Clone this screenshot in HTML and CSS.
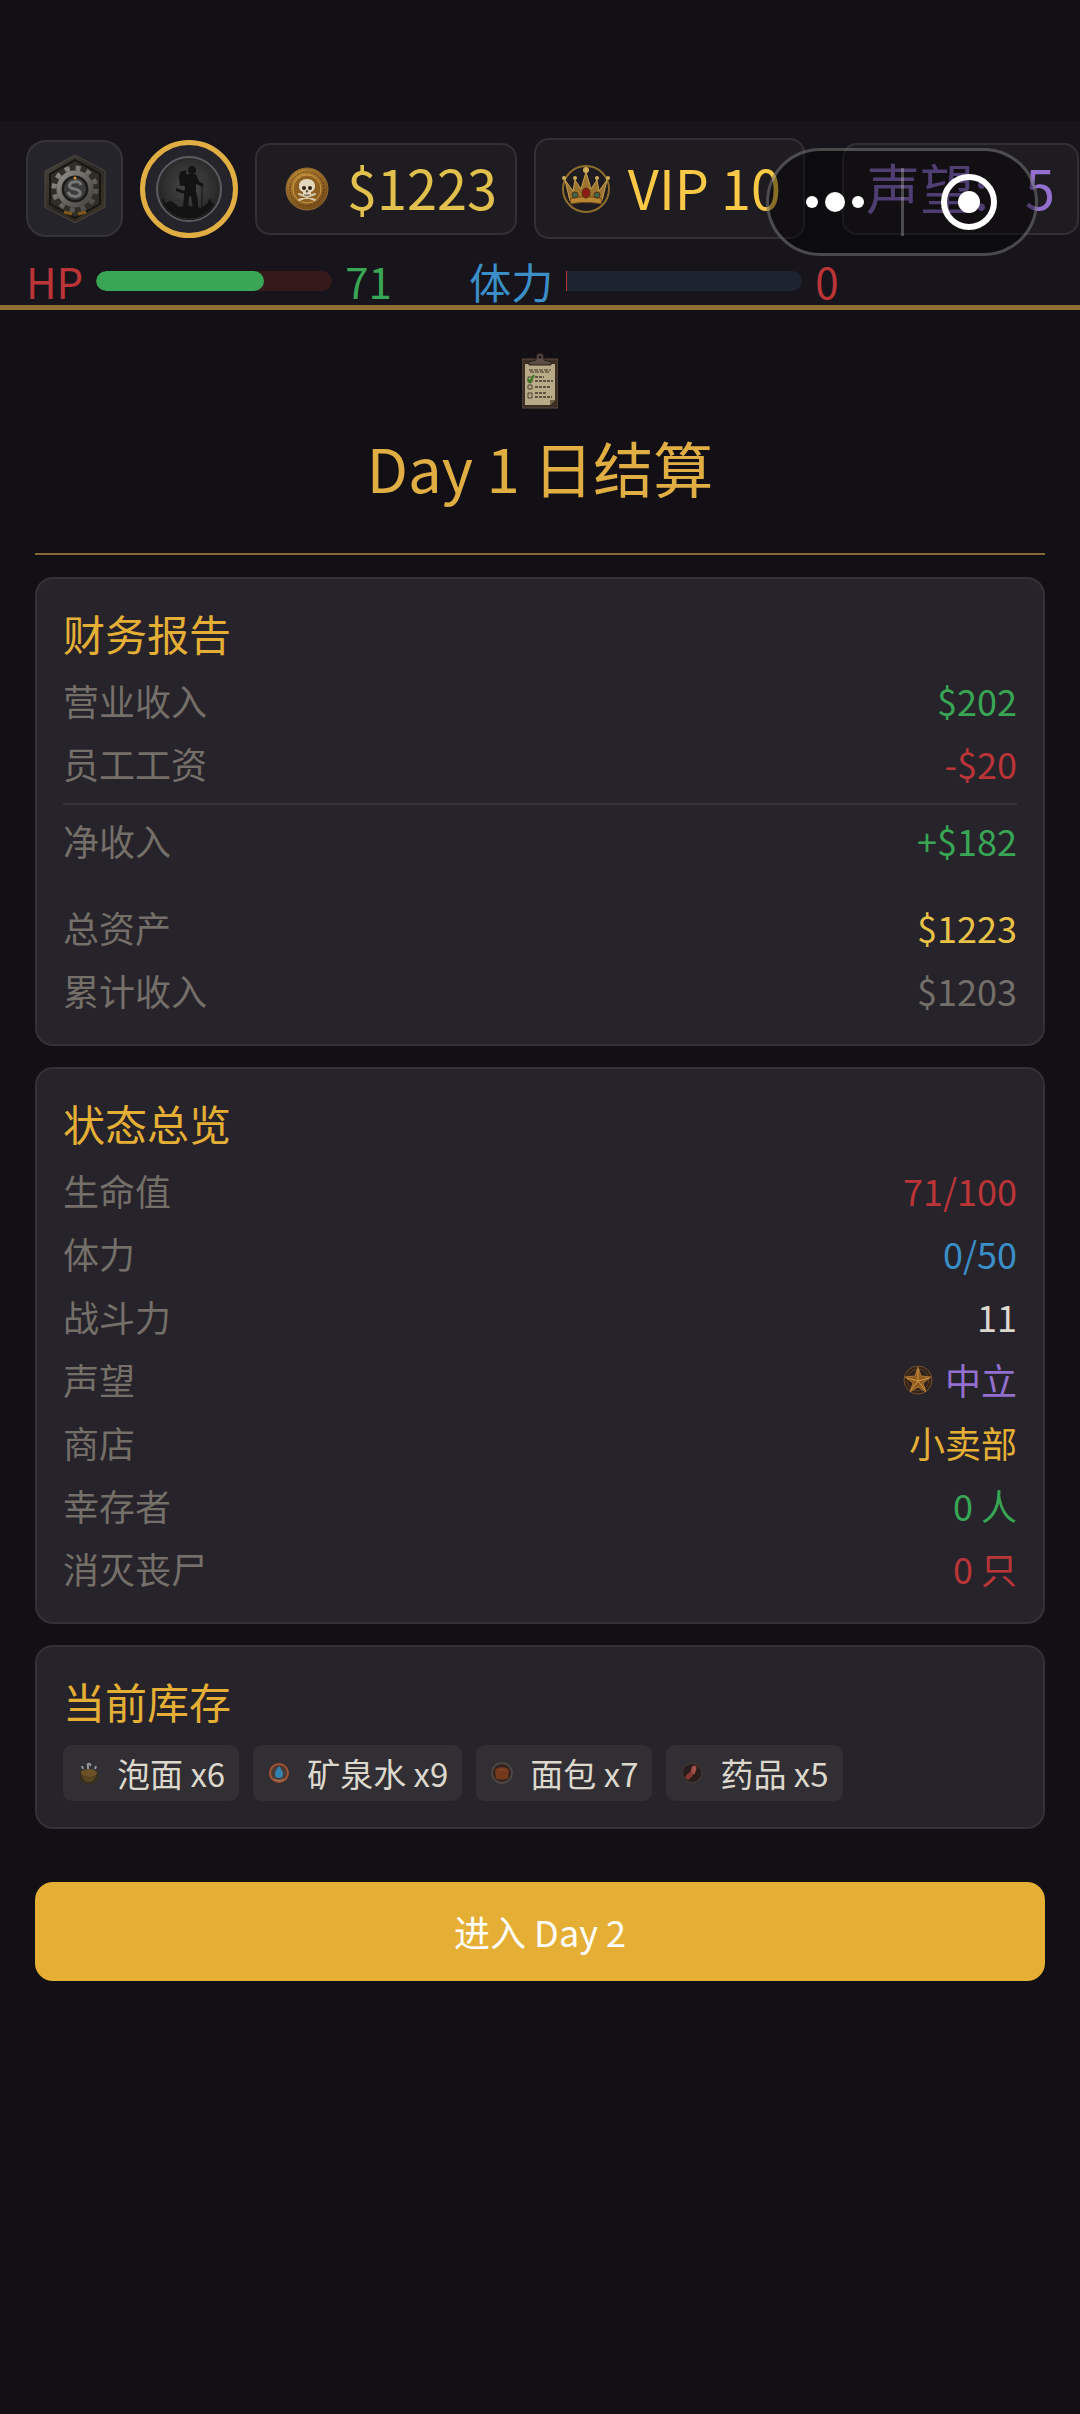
FILE: index.html
```html
<!DOCTYPE html>
<html lang="zh-CN">
<head>
    <meta charset="UTF-8">
    <meta name="viewport" content="width=device-width, initial-scale=1.0">
    <title>Day 1 日结算</title>
    <link rel="stylesheet" href="styles.css">
</head>
<body>
    <header class="topbar">
        <div class="topbar-row">
            <button class="logo-btn" type="button" aria-label="菜单">
                <svg width="64" height="70" viewBox="0 0 64 70">
                    <defs>
                        <linearGradient id="iron" x1="0" y1="0" x2="1" y2="1">
                            <stop offset="0" stop-color="#4a4741"/>
                            <stop offset="0.5" stop-color="#2b2823"/>
                            <stop offset="1" stop-color="#403528"/>
                        </linearGradient>
                        <linearGradient id="steel" x1="0" y1="0" x2="1" y2="1">
                            <stop offset="0" stop-color="#8f8d88"/>
                            <stop offset="1" stop-color="#45433f"/>
                        </linearGradient>
                    </defs>
                    <path d="M32 1 62 17V53L32 69 2 53V17Z" fill="url(#iron)" stroke="#4a463f"/>
                    <path d="M32 6 57 20V50L32 64 7 50V20Z" fill="#302c26" stroke="#171512" stroke-width="2"/>
                    <circle cx="32" cy="35" r="21" fill="none" stroke="url(#steel)" stroke-width="5" stroke-dasharray="5 6"/>
                    <circle cx="32" cy="35" r="16" fill="#2a2927" stroke="url(#steel)" stroke-width="5"/>
                    <circle cx="32" cy="35" r="12" fill="#3b3b3b" stroke="#1b1a19" stroke-width="2"/>
                    <path d="M38 31c-1-3-4-4-7-3-4 0-6 4-3 6 3 1 8 1 9 4 1 4-4 5-7 4-3 0-4-2-5-4" fill="none" stroke="#777775" stroke-width="3"/>
                    <circle cx="32" cy="24" r="1.5" fill="#d99a2b"/>
                    <path d="M21 58l8 2M35 60l8-2" stroke="#80571c" stroke-width="3"/>
                </svg>
            </button>
            <button class="avatar-btn" type="button" aria-label="角色">
                <svg width="68" height="68" viewBox="0 0 68 68">
                    <defs>
                        <radialGradient id="fog" cx="0.5" cy="0.45" r="0.6">
                            <stop offset="0" stop-color="#4a4a4a"/>
                            <stop offset="1" stop-color="#1f1f20"/>
                        </radialGradient>
                        <clipPath id="disc"><circle cx="34" cy="34" r="31"/></clipPath>
                    </defs>
                    <circle cx="34" cy="34" r="32" fill="url(#fog)" stroke="#5c5c60" stroke-width="2"/>
                    <g clip-path="url(#disc)" fill="#131314">
                        <path d="M0 52l6-4 2-5 2 5 6-2 8 6 10-1 12 2 6-4 3-6 2 5 6 3 5 1v17H0Z"/>
                        <circle cx="37" cy="15" r="4"/>
                        <path d="M32 19h9l3 7 5 4-1 2-7-3v8l2 8v9h-5l-2-13-2 1-1 12h-5l1-14 1-8-4-4 1-3Z"/>
                        <path d="M25 17l6-2 2 15-8 1-1-9Z"/>
                        <path d="M21 33l9 3 6 2-1 2-9-2-5-2Z"/>
                        <path d="M47 28v25" stroke="#131314"/>
                    </g>
                    <circle cx="34" cy="34" r="30" fill="none" stroke="#2b2b2c"/>
                </svg>
            </button>
            <div class="badge money">
                <svg width="44" height="44" viewBox="0 0 44 44">
                    <defs>
                        <radialGradient id="gold" cx="0.4" cy="0.3" r="0.8">
                            <stop offset="0" stop-color="#c8933a"/>
                            <stop offset="1" stop-color="#6d4316"/>
                        </radialGradient>
                    </defs>
                    <circle cx="22" cy="22" r="21" fill="url(#gold)" stroke="#8d6a31"/>
                    <circle cx="22" cy="22" r="17" fill="none" stroke="#5b3a12" stroke-dasharray="2 1"/>
                    <circle cx="22" cy="22" r="14" fill="#8f5f20" stroke="#c89a48"/>
                    <path d="M14 27l16 6M30 27l-16 6" stroke="#d6c9ab" stroke-width="2" stroke-linecap="round"/>
                    <path d="M22 12c-5 0-8 3-8 7 0 3 1 5 4 6v3h8v-3c3-1 4-3 4-6 0-4-3-7-8-7Z" fill="#e2d8c0"/>
                    <circle cx="19" cy="21" r="2" fill="#30200f"/>
                    <circle cx="25" cy="21" r="2" fill="#30200f"/>
                    <path d="M22 23l1 2h-2ZM20 27v2M22 27v2M24 27v2" fill="#30200f" stroke="#6a5638"/>
                </svg>
                <span>$1223</span>
            </div>
            <div class="badge vip">
                <svg width="48" height="50" viewBox="0 0 48 50">
                    <circle cx="24" cy="25" r="23" fill="none" stroke="#8d6d2a" stroke-width="2"/>
                    <path d="M3 16l8 11 2-11 6 9 5-17 5 17 6-9 2 11 8-11-5 21H8Z" fill="#9c7430" stroke="#c9a24e"/>
                    <path d="M8 35c8-3 24-3 32 0l-1 5c-8-2-22-2-30 0Z" fill="#b88632" stroke="#6b4515"/>
                    <g fill="#cfac58">
                        <circle cx="24" cy="6" r="3"/>
                        <circle cx="13" cy="14" r="2"/>
                        <circle cx="35" cy="14" r="2"/>
                        <circle cx="2" cy="14" r="2"/>
                        <circle cx="46" cy="14" r="2"/>
                    </g>
                    <ellipse cx="24" cy="29" rx="4" ry="5" fill="#8c1c14" stroke="#53300e"/>
                    <circle cx="13" cy="31" r="3" fill="#3f6650" stroke="#53300e"/>
                    <circle cx="35" cy="31" r="3" fill="#3f6650" stroke="#53300e"/>
                </svg>
                <span>VIP 10</span>
            </div>
            <div class="badge reputation">
                <span>声望:</span>
                <span>5</span>
            </div>
        </div>
        <div class="bars">
            <div class="stat">
                <span class="red">HP</span>
                <div class="track track-hp"><div class="fill" style="width: 71%"></div></div>
                <span class="stat-value green">71</span>
            </div>
            <div class="stat">
                <span class="blue">体力</span>
                <div class="track track-energy"><div class="fill" style="width: 0%"></div></div>
                <span class="stat-value red">0</span>
            </div>
        </div>
    </header>

    <!-- floating mini program buttons -->
    <div class="capsule">
        <button type="button" aria-label="更多">
            <svg width="60" height="24" viewBox="0 0 60 24" fill="#fff">
                <circle cx="7" cy="12" r="6"/>
                <circle cx="30" cy="12" r="10"/>
                <circle cx="53" cy="12" r="6"/>
            </svg>
        </button>
        <button type="button" aria-label="关闭">
            <svg width="58" height="58" viewBox="0 0 58 58">
                <circle cx="29" cy="29" r="25" fill="none" stroke="#fff" stroke-width="6"/>
                <circle cx="29" cy="29" r="11" fill="#fff"/>
            </svg>
        </button>
    </div>

    <main class="page">
        <div class="page-head">
            <svg width="36" height="56" viewBox="0 0 36 56">
                <path d="M0 6h36v49H0Z" fill="#3b2e24" stroke="#5a4a3c"/>
                <path d="M3 11h30v36l-5 5H3Z" fill="#b9ab87"/>
                <path d="M7 12V9l7-2 1-5c1-2 5-2 6 0l1 5 7 2v3Z" fill="#5d4c45" stroke="#2b211c"/>
                <circle cx="18" cy="4" r="1.5" fill="#17120f"/>
                <path d="M7 17h22M8 19h20" stroke="#3d3527" stroke-dasharray="4 1"/>
                <path d="M13 24h9M13 28h18M13 34h16M13 40h12M13 44h17" stroke="#5c5340" stroke-width="2" stroke-dasharray="3 1"/>
                <path d="M6 24h4v5H6ZM6 32h4v4H6ZM6 40h4v5H6Z" fill="none" stroke="#4d4532"/>
                <path d="M6 26l2 3 4-7" fill="none" stroke="#347a22" stroke-width="2"/>
                <path d="M28 52v-5h5Z" fill="#6f5f45"/>
            </svg>
            <h1>Day 1 日结算</h1>
        </div>

        <section class="card">
            <h2>财务报告</h2>
            <dl>
                <div class="row"><dt>营业收入</dt><dd class="green">$202</dd></div>
                <div class="row"><dt>员工工资</dt><dd class="red">-$20</dd></div>
                <div class="row row-total"><dt>净收入</dt><dd class="green">+$182</dd></div>
                <div class="row row-assets"><dt>总资产</dt><dd class="yellow">$1223</dd></div>
                <div class="row"><dt>累计收入</dt><dd class="muted">$1203</dd></div>
            </dl>
        </section>

        <section class="card">
            <h2>状态总览</h2>
            <dl>
                <div class="row"><dt>生命值</dt><dd class="red">71/100</dd></div>
                <div class="row"><dt>体力</dt><dd class="blue">0/50</dd></div>
                <div class="row"><dt>战斗力</dt><dd>11</dd></div>
                <div class="row">
                    <dt>声望</dt>
                    <dd class="purple">
                        <svg width="30" height="30" viewBox="0 0 30 30">
                            <circle cx="15" cy="15" r="14" fill="#30231c" stroke="#7a5229"/>
                            <circle cx="15" cy="15" r="11" fill="none" stroke="#5f3f20"/>
                            <path d="M15 2l3 9 10 1-8 6 3 9-8-5-8 5 3-9-8-6 10-1Z" fill="#8f5a1e" stroke="#a87433"/>
                            <path d="M15 4v12l-7 9M15 16l11-3M15 16l7 9M15 16L4 13" fill="none" stroke="#d09a4c"/>
                        </svg>
                        中立
                    </dd>
                </div>
                <div class="row"><dt>商店</dt><dd class="gold">小卖部</dd></div>
                <div class="row"><dt>幸存者</dt><dd class="green">0 人</dd></div>
                <div class="row"><dt>消灭丧尸</dt><dd class="red">0 只</dd></div>
            </dl>
        </section>

        <section class="card">
            <h2>当前库存</h2>
            <ul class="items">
                <li>
                    <svg width="24" height="24" viewBox="0 0 24 24">
                        <path d="M3 10h18v6c0 5-3 7-9 7s-9-2-9-7Z" fill="#37301f"/>
                        <ellipse cx="12" cy="12" rx="8" ry="4" fill="#6c5126"/>
                        <path d="M5 14c1 5 3 7 7 7s6-2 7-7c-4 3-10 3-14 0Z" fill="#584522"/>
                        <path d="M6 8L5 5M11 8V5c-2-3 4-3 2 0M18 8l1-3" fill="none" stroke="#8e979b" stroke-width="2"/>
                    </svg>
                    泡面 x6
                </li>
                <li>
                    <svg width="24" height="24" viewBox="0 0 24 24">
                        <circle cx="12" cy="12" r="9" fill="#4b3c38" stroke="#a3532f" stroke-width="2"/>
                        <path d="M12 5c3 4 4 6 4 8a4 4 0 0 1-8 0c0-2 1-4 4-8Z" fill="#3482b2"/>
                        <path d="M7 18c3 2 7 2 10 0" fill="none" stroke="#bd8765"/>
                    </svg>
                    矿泉水 x9
                </li>
                <li>
                    <svg width="24" height="24" viewBox="0 0 24 24">
                        <circle cx="12" cy="12" r="10" fill="#30231f" stroke="#4c4542" stroke-width="2"/>
                        <path d="M5 10c0-5 14-5 14 0l-1 7c-3 2-9 2-12 0Z" fill="#75391d"/>
                        <path d="M8 10c2-2 6-2 8 0" fill="none" stroke="#8e4a26"/>
                    </svg>
                    面包 x7
                </li>
                <li>
                    <svg width="24" height="24" viewBox="0 0 24 24">
                        <circle cx="12" cy="12" r="10" fill="#291d1d" stroke="#393331" stroke-width="2"/>
                        <path d="M14 7l-1 4" stroke="#9d4842" stroke-width="5" stroke-linecap="round"/>
                        <path d="M10 14l-2 2" stroke="#843630" stroke-width="5" stroke-linecap="round"/>
                        <path d="M15 6l-1 4" stroke="#a8655e" stroke-linecap="round"/>
                    </svg>
                    药品 x5
                </li>
            </ul>
        </section>

        <button class="next-btn" type="button">进入 Day 2</button>
    </main>
</body>
</html>
```
FILE: styles.css
```css
* {
    box-sizing: border-box;
    margin: 0;
    padding: 0;
}

body {
    min-height: 100vh;
    padding-top: 121px;
    overflow-x: hidden;
    background-color: #121014;
    color: #ddd8cd;
    font-family: "Noto Sans CJK SC", sans-serif;
    font-size: 36px;
}

button {
    border: none;
    background: none;
    font: inherit;
    cursor: pointer;
}

svg {
    display: block;
    flex-shrink: 0;
}

.red { color: #bb3538; }
.green { color: #38a654; }
.blue { color: #3b8fc9; }
.yellow { color: #e9c247; }
.gold { color: #e5af36; }
.purple { color: #9370d0; }
.muted { color: #746f69; }

/* top bar */
.topbar {
    padding: 17px 0 0 26px;
    overflow: hidden;
    background-color: #17141b;
    border-bottom: 5px solid #8f6f35;
}

.topbar-row {
    display: flex;
    align-items: center;
    gap: 17px;
}

.logo-btn,
.avatar-btn {
    display: flex;
    flex-shrink: 0;
    align-items: center;
    justify-content: center;
    width: 97px;
    height: 97px;
    background-color: #26242b;
    border: 2px solid #363338;
    border-radius: 20px;
}

.avatar-btn {
    width: 98px;
    height: 98px;
    border: 5px solid #e0ae42;
    border-radius: 50%;
}

.badge {
    display: flex;
    flex-shrink: 0;
    align-items: center;
    gap: 18px;
    height: 92px;
    padding: 0 18px 0 28px;
    background-color: #1f1c21;
    border: 2px solid #333035;
    border-radius: 15px;
    font-size: 54px;
    line-height: 80px;
    white-space: nowrap;
}

.badge span {
    padding-bottom: 4px;
}

.money {
    color: #e2c04d;
}

.vip {
    height: 101px;
    padding-right: 22px;
    padding-left: 26px;
    color: #f9c846;
}

.reputation {
    gap: 36px;
    margin-left: 20px;
    padding: 0 22px;
    color: #9370d0;
}

.bars {
    display: flex;
    gap: 36px;
    margin-top: 18px;
    font-size: 42px;
    line-height: 48px;
}

.stat {
    display: flex;
    align-items: center;
    gap: 13px;
}

.stat-value {
    min-width: 88px;
}

.track {
    width: 236px;
    height: 20px;
    overflow: hidden;
    border-radius: 10px;
}

.track-hp {
    background-color: #341a1b;
}

.track-energy {
    background-color: #1b2430;
    border-left: 1px solid #bb3538;
    border-radius: 0 10px 10px 0;
}

.fill {
    height: 100%;
    background-color: #38a654;
    border-radius: 10px;
}

/* mini program capsule */
.capsule {
    position: absolute;
    top: 148px;
    right: 42px;
    display: flex;
    width: 272px;
    height: 108px;
    padding: 17px 0;
    background-color: rgba(0, 0, 0, 0.45);
    border: 3px solid rgba(255, 255, 255, 0.25);
    border-radius: 54px;
}

.capsule button {
    display: flex;
    flex: 1;
    align-items: center;
    justify-content: center;
}

.capsule button + button {
    border-left: 3px solid rgba(255, 255, 255, 0.25);
}

/* page */
.page {
    padding: 43px 35px;
}

.page-head {
    display: flex;
    flex-direction: column;
    align-items: center;
    gap: 16px;
    margin-bottom: 22px;
    padding-bottom: 44px;
    border-bottom: 2px solid #84683a;
}

h1 {
    color: #e0ae42;
    font-size: 60px;
    font-weight: 400;
    line-height: 84px;
}

.card {
    margin-bottom: 21px;
    padding: 24px 26px 28px;
    background-color: #26232a;
    border: 2px solid #343136;
    border-radius: 18px;
}

h2 {
    margin-bottom: 12px;
    color: #e5af36;
    font-size: 42px;
    font-weight: 400;
    line-height: 60px;
}

dl {
    display: flex;
    flex-direction: column;
    gap: 12px;
}

.row {
    display: flex;
    justify-content: space-between;
    line-height: 51px;
}

.row dt {
    color: #746f69;
}

.row dd {
    display: flex;
    align-items: center;
    gap: 12px;
}

.row-total {
    margin-top: 2px;
    padding-top: 10px;
    border-top: 2px solid #363338;
}

.row-assets {
    margin-top: 24px;
}

.items {
    display: flex;
    flex-wrap: wrap;
    gap: 14px;
    margin-top: 14px;
    list-style: none;
}

.items li {
    display: flex;
    align-items: center;
    gap: 16px;
    height: 56px;
    padding: 0 14px;
    background-color: #312f34;
    border-radius: 9px;
    font-size: 33px;
    line-height: 48px;
}

.card:last-of-type {
    padding-bottom: 26px;
}

.next-btn {
    display: block;
    width: 100%;
    height: 99px;
    margin-top: 53px;
    background-color: #e5af36;
    border-radius: 18px;
    color: #fff;
    line-height: 51px;
}
```
